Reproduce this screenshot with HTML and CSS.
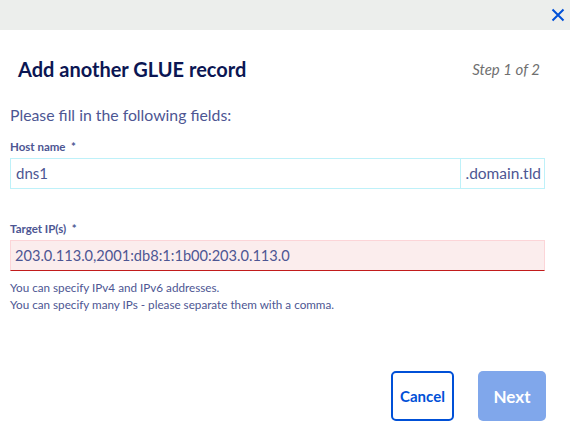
FILE: index.html
```html
<!DOCTYPE html>
<html>
<head>
<meta charset="utf-8">
<link rel="stylesheet" href="styles.css">
</head>
<body>
<div class="modal">
  <div class="topbar">
    <button class="close" aria-label="Close">
      <svg width="14" height="14" viewBox="0 0 14 14"><path d="M1.5 1.5 L12.5 12.5 M12.5 1.5 L1.5 12.5" stroke="#0050d7" stroke-width="2" fill="none"/></svg>
    </button>
  </div>
  <div class="head">
    <h1 class="title">Add another GLUE record</h1>
    <span class="step">Step 1 of 2</span>
  </div>
  <div class="body">
    <p class="intro">Please fill in the following fields:</p>
    <div class="field">
      <label class="label">Host name&nbsp; *</label>
      <div class="group">
        <div class="input">dns1</div>
        <div class="addon">.domain.tld</div>
      </div>
    </div>
    <div class="field field-ip">
      <label class="label">Target IP(s)&nbsp; *</label>
      <div class="input error">203.0.113.0,2001:db8:1:1b00:203.0.113.0</div>
      <p class="hint">You can specify IPv4 and IPv6 addresses.</p>
      <p class="hint">You can specify many IPs - please separate them with a comma.</p>
    </div>
  </div>
  <div class="actions">
    <button class="btn btn-cancel">Cancel</button>
    <button class="btn btn-next">Next</button>
  </div>
</div>
</body>
</html>
```
FILE: styles.css
```css
html, body {
  margin: 0;
  padding: 0;
  background: #fff;
}
body {
  font-family: "Lato", "Liberation Sans", sans-serif;
  color: #4d5693;
}
.modal {
  width: 570px;
  height: 428px;
  display: flex;
  flex-direction: column;
}
.topbar {
  height: 30px;
  background: #eceeec;
  display: flex;
  justify-content: flex-end;
  align-items: center;
}
.close {
  border: 0;
  background: none;
  padding: 0;
  margin-right: 5px;
  width: 14px;
  height: 14px;
  display: flex;
}
.head {
  display: flex;
  justify-content: space-between;
  align-items: center;
  padding: 27px 30px 0 18px;
}
.title {
  margin: 0;
  font-size: 20px;
  font-weight: 700;
  color: #0b1653;
  line-height: 24px;
}
.step {
  font-size: 15px;
  font-style: italic;
  color: #707070;
}
.body {
  padding: 0 25px 0 10px;
}
.intro {
  margin: 24px 0 0;
  font-size: 15.8px;
  line-height: 20px;
}
.field {
  margin-top: 15px;
}
.label {
  display: block;
  font-size: 11.5px;
  font-weight: 700;
  line-height: 14px;
  margin-bottom: 4px;
}
.group {
  display: flex;
  border: 1px solid #bef1f9;
  height: 29px;
}
.input {
  flex: 1;
  font-size: 15px;
  line-height: 29px;
  padding-left: 5px;
}
.addon {
  border-left: 1px solid #bef1f9;
  font-size: 15.5px;
  line-height: 29px;
  padding: 0 3px 0 4px;
}
.field-ip {
  margin-top: 33px;
}
.input.error {
  background: #fbeded;
  border: 1px solid #fcd5d8;
  border-bottom: 1px solid #c21b1b;
  height: 29px;
  padding-left: 4px;
  font-size: 14.6px;
}
.hint {
  margin: 0;
  font-size: 11.7px;
  line-height: 17px;
}
.field-ip .input + .hint {
  margin-top: 8px;
}
.actions {
  margin-top: auto;
  display: flex;
  justify-content: flex-end;
  gap: 24px;
  padding: 0 24px 7px 0;
}
.btn {
  height: 50px;
  border-radius: 5px;
  font-family: inherit;
  font-size: 15px;
  font-weight: 700;
}
.btn-cancel {
  width: 63px;
  border: 2px solid #0050d7;
  background: #fff;
  color: #0050d7;
  padding: 0;
}
.btn-next {
  width: 68px;
  border: 0;
  background: #80a7eb;
  color: #fff;
  font-size: 17px;
}
```
